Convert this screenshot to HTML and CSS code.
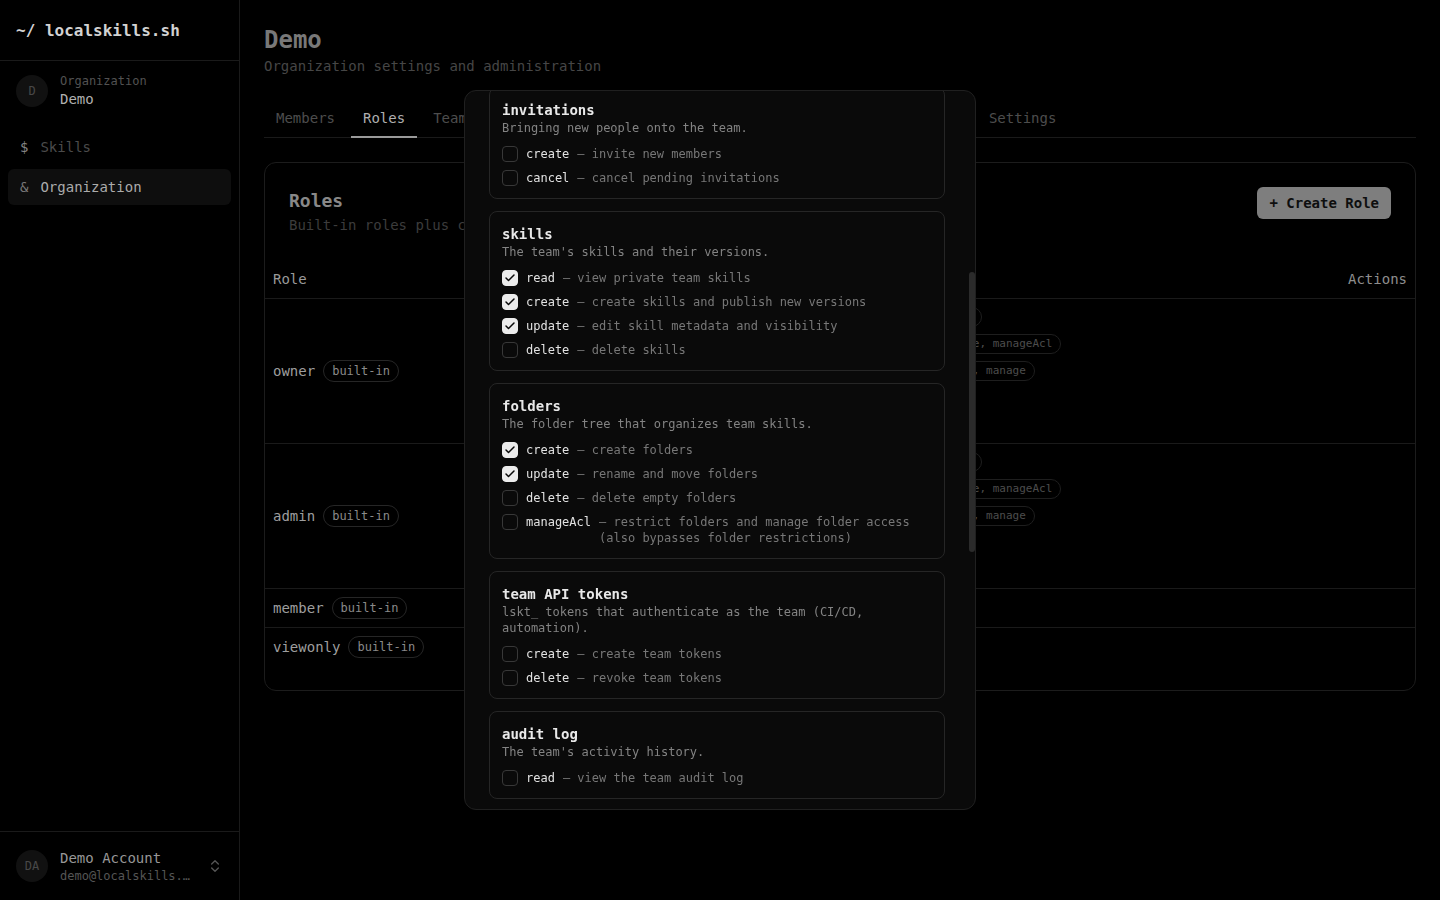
FILE: index.html
```html
<!DOCTYPE html>
<html lang="en">
<head>
  <meta charset="UTF-8" />
  <meta name="viewport" content="width=device-width, initial-scale=1.0" />
  <title>Roles – Demo – localskills.sh</title>
  <link rel="stylesheet" href="styles.css">
</head>

<body>
  <div class="app">
    <!-- SIDEBAR -->
    <aside class="sidebar">
      <div class="brand">~/ localskills.sh</div>

      <div class="org-switch">
        <div class="avatar">D</div>
        <div>
          <div class="org-label">Organization</div>
          <div class="org-name">Demo</div>
        </div>
      </div>

      <nav class="nav">
        <a class="nav-item" href="#"><span class="nav-sym">$</span>Skills</a>
        <a class="nav-item active" href="#"><span class="nav-sym">&amp;</span>Organization</a>
      </nav>

      <div class="account">
        <div class="avatar">DA</div>
        <div class="account-text">
          <div class="account-name">Demo Account</div>
          <div class="account-mail">demo@localskills.sh</div>
        </div>
        <svg class="chevrons" width="16" height="16" viewBox="0 0 24 24" fill="none" stroke="currentColor" stroke-width="2" stroke-linecap="round" stroke-linejoin="round"><path d="m7 15 5 5 5-5"/><path d="m7 9 5-5 5 5"/></svg>
      </div>
    </aside>

    <!-- MAIN -->
    <main class="main">
      <h1 class="page-title">Demo</h1>
      <p class="page-sub">Organization settings and administration</p>

      <div class="tabs">
        <a class="tab" href="#">Members</a>
        <a class="tab active" href="#">Roles</a>
        <a class="tab" href="#">Teams</a>
        <a class="tab" href="#">Invitations</a>
        <a class="tab" href="#">Team Tokens</a>
        <a class="tab" href="#">Audit Log</a>
        <a class="tab" href="#">Billing</a>
        <a class="tab" href="#">SSO</a>
        <a class="tab" href="#">Settings</a>
      </div>

      <section class="card">
        <div class="card-head">
          <div>
            <div class="card-title">Roles</div>
            <div class="card-desc">Built-in roles plus custom roles for this organization.</div>
          </div>
          <button class="btn">+ Create Role</button>
        </div>

        <table class="roles">
          <colgroup>
            <col class="col-role">
            <col class="col-desc">
            <col>
            <col class="col-actions">
          </colgroup>
          <thead>
            <tr>
              <th>Role</th>
              <th>Description</th>
              <th>Permissions</th>
              <th class="right">Actions</th>
            </tr>
          </thead>
          <tbody>
            <tr>
              <td><div class="role"><span class="role-name">owner</span><span class="badge">built-in</span></div></td>
              <td class="muted">Full control of the organization</td>
              <td>
                <div class="perms">
                  <span class="perm">roles: read, create, update, delete</span>
                  <span class="perm">skills: read, create, update, delete, manageAcl</span>
                  <span class="perm">teams: read, create, update, delete, manage</span>
                  <span class="perm">folders: create, update, delete</span>
                  <span class="perm">tokens: create, delete</span>
                </div>
              </td>
              <td></td>
            </tr>
            <tr>
              <td><div class="role"><span class="role-name">admin</span><span class="badge">built-in</span></div></td>
              <td class="muted">Manage members, skills and settings</td>
              <td>
                <div class="perms">
                  <span class="perm">roles: read, create, update, delete</span>
                  <span class="perm">skills: read, create, update, delete, manageAcl</span>
                  <span class="perm">teams: read, create, update, delete, manage</span>
                  <span class="perm">folders: create, update, delete</span>
                  <span class="perm">audit: read</span>
                </div>
              </td>
              <td></td>
            </tr>
            <tr>
              <td><div class="role"><span class="role-name">member</span><span class="badge">built-in</span></div></td>
              <td class="muted">Create and publish skills</td>
              <td><div class="perms"><span class="perm">skills: read, create</span></div></td>
              <td></td>
            </tr>
            <tr>
              <td><div class="role"><span class="role-name">viewonly</span><span class="badge">built-in</span></div></td>
              <td class="muted">Read-only access</td>
              <td><div class="perms"><span class="perm">skills: read</span></div></td>
              <td></td>
            </tr>
          </tbody>
        </table>
      </section>
    </main>
  </div>

  <!-- CREATE ROLE DIALOG -->
  <div class="overlay">
    <div class="dialog">
      <div class="dialog-scroll">
        <div class="dialog-head">
          <h2 class="dialog-title">Create role</h2>
          <p class="dialog-desc">Custom roles grant a chosen set of permissions to members.</p>
        </div>

        <label class="field">
          <span class="field-label">Name</span>
          <input class="input" value="reviewer">
        </label>
        <label class="field">
          <span class="field-label">Description</span>
          <input class="input" value="Reviews and publishes skills">
        </label>

        <div class="perm-heading">Permissions</div>

        <div class="groups">
          <div class="group">
            <div class="group-title">organization</div>
            <div class="group-desc">Organization profile and settings.</div>
            <div class="opts">
              <div class="opt"><span class="check"></span><span class="opt-name">read</span><span class="opt-desc">— view organization settings</span></div>
              <div class="opt"><span class="check"></span><span class="opt-name">update</span><span class="opt-desc">— change name and settings</span></div>
            </div>
          </div>

          <div class="group">
            <div class="group-title">members</div>
            <div class="group-desc">People who belong to the team.</div>
            <div class="opts">
              <div class="opt"><span class="check"></span><span class="opt-name">read</span><span class="opt-desc">— list members</span></div>
              <div class="opt"><span class="check"></span><span class="opt-name">update</span><span class="opt-desc">— change member roles</span></div>
              <div class="opt"><span class="check"></span><span class="opt-name">remove</span><span class="opt-desc">— remove members</span></div>
            </div>
          </div>

          <div class="group">
            <div class="group-title">roles</div>
            <div class="group-desc">Custom roles and their permissions.</div>
            <div class="opts">
              <div class="opt"><span class="check"></span><span class="opt-name">create</span><span class="opt-desc">— create custom roles</span></div>
              <div class="opt"><span class="check"></span><span class="opt-name">update</span><span class="opt-desc">— edit custom roles</span></div>
              <div class="opt"><span class="check"></span><span class="opt-name">delete</span><span class="opt-desc">— delete custom roles</span></div>
            </div>
          </div>

          <div class="group" id="grp-invitations">
            <div class="group-title">invitations</div>
            <div class="group-desc">Bringing new people onto the team.</div>
            <div class="opts">
              <div class="opt"><span class="check"></span><span class="opt-name">create</span><span class="opt-desc">— invite new members</span></div>
              <div class="opt"><span class="check"></span><span class="opt-name">cancel</span><span class="opt-desc">— cancel pending invitations</span></div>
            </div>
          </div>

          <div class="group">
            <div class="group-title">skills</div>
            <div class="group-desc">The team's skills and their versions.</div>
            <div class="opts">
              <div class="opt"><span class="check on"><svg width="12" height="12" viewBox="0 0 24 24" fill="none" stroke="currentColor" stroke-width="3" stroke-linecap="round" stroke-linejoin="round"><path d="M20 6 9 17l-5-5"/></svg></span><span class="opt-name">read</span><span class="opt-desc">— view private team skills</span></div>
              <div class="opt"><span class="check on"><svg width="12" height="12" viewBox="0 0 24 24" fill="none" stroke="currentColor" stroke-width="3" stroke-linecap="round" stroke-linejoin="round"><path d="M20 6 9 17l-5-5"/></svg></span><span class="opt-name">create</span><span class="opt-desc">— create skills and publish new versions</span></div>
              <div class="opt"><span class="check on"><svg width="12" height="12" viewBox="0 0 24 24" fill="none" stroke="currentColor" stroke-width="3" stroke-linecap="round" stroke-linejoin="round"><path d="M20 6 9 17l-5-5"/></svg></span><span class="opt-name">update</span><span class="opt-desc">— edit skill metadata and visibility</span></div>
              <div class="opt"><span class="check"></span><span class="opt-name">delete</span><span class="opt-desc">— delete skills</span></div>
            </div>
          </div>

          <div class="group">
            <div class="group-title">folders</div>
            <div class="group-desc">The folder tree that organizes team skills.</div>
            <div class="opts">
              <div class="opt"><span class="check on"><svg width="12" height="12" viewBox="0 0 24 24" fill="none" stroke="currentColor" stroke-width="3" stroke-linecap="round" stroke-linejoin="round"><path d="M20 6 9 17l-5-5"/></svg></span><span class="opt-name">create</span><span class="opt-desc">— create folders</span></div>
              <div class="opt"><span class="check on"><svg width="12" height="12" viewBox="0 0 24 24" fill="none" stroke="currentColor" stroke-width="3" stroke-linecap="round" stroke-linejoin="round"><path d="M20 6 9 17l-5-5"/></svg></span><span class="opt-name">update</span><span class="opt-desc">— rename and move folders</span></div>
              <div class="opt"><span class="check"></span><span class="opt-name">delete</span><span class="opt-desc">— delete empty folders</span></div>
              <div class="opt"><span class="check"></span><span class="opt-name">manageAcl</span><span class="opt-desc">— restrict folders and manage folder access (also bypasses folder restrictions)</span></div>
            </div>
          </div>

          <div class="group">
            <div class="group-title">team API tokens</div>
            <div class="group-desc">lskt_ tokens that authenticate as the team (CI/CD, automation).</div>
            <div class="opts">
              <div class="opt"><span class="check"></span><span class="opt-name">create</span><span class="opt-desc">— create team tokens</span></div>
              <div class="opt"><span class="check"></span><span class="opt-name">delete</span><span class="opt-desc">— revoke team tokens</span></div>
            </div>
          </div>

          <div class="group">
            <div class="group-title">audit log</div>
            <div class="group-desc">The team's activity history.</div>
            <div class="opts">
              <div class="opt"><span class="check"></span><span class="opt-name">read</span><span class="opt-desc">— view the team audit log</span></div>
            </div>
          </div>

          <div class="group">
            <div class="group-title">settings</div>
            <div class="group-desc">Team-wide configuration.</div>
            <div class="opts">
              <div class="opt"><span class="check"></span><span class="opt-name">update</span><span class="opt-desc">— change team settings</span></div>
            </div>
          </div>
        </div>

        <div class="dialog-foot">
          <button class="btn-ghost">Cancel</button>
          <button class="btn-solid">Create role</button>
        </div>
      </div>
      <div class="scroll-thumb"></div>
    </div>
  </div>

  <script>
    const scroller = document.querySelector(".dialog-scroll");
    const anchor = document.getElementById("grp-invitations");
    scroller.scrollTop = anchor.offsetTop + 4;
  </script>
</body>
</html>
```

FILE: styles.css
```css
body { margin: 0; background: #000; color: #a0a0a0; font-family: "DejaVu Sans Mono", "Liberation Mono", monospace; }
.app { display: flex; height: 100vh; }

/* sidebar */
.sidebar { width: 240px; flex-shrink: 0; box-sizing: border-box; border-right: 1px solid #1a1a1a; display: flex; flex-direction: column; }
.brand { height: 60px; padding: 0 16px; border-bottom: 1px solid #1a1a1a; display: flex; align-items: center; font-size: 16px; font-weight: 600; color: #d2d2d2; }
.org-switch { display: flex; align-items: center; gap: 12px; padding: 12px 16px 11px; }
.avatar { width: 32px; height: 32px; flex-shrink: 0; border-radius: 50%; background: #111; color: #484848; font-size: 12px; display: flex; align-items: center; justify-content: center; }
.org-label { font-size: 12px; line-height: 16px; color: #525252; }
.org-name { font-size: 14px; line-height: 20px; color: #b0b0b0; }
.nav { flex: 1; padding: 9px 8px; display: flex; flex-direction: column; gap: 4px; }
.nav-item { height: 36px; padding: 0 12px; border-radius: 6px; display: flex; align-items: center; gap: 12px; font-size: 14px; color: #4b4b4b; text-decoration: none; }
.nav-sym { color: #858585; }
.nav-item.active { background: #0e0e0e; color: #ababab; }
.nav-item.active .nav-sym { color: #777; }
.account { border-top: 1px solid #1a1a1a; padding: 16px; display: flex; align-items: center; gap: 12px; }
.account-text { flex: 1; min-width: 0; }
.account-name { font-size: 14px; line-height: 20px; color: #979797; }
.account-mail { font-size: 12px; line-height: 16px; color: #555; white-space: nowrap; overflow: hidden; text-overflow: ellipsis; }
.chevrons { color: #555; flex-shrink: 0; }

/* main */
.main { flex: 1; min-width: 0; padding: 24px; }
.page-title { margin: 0; font-size: 24px; line-height: 33px; font-weight: 700; color: #787878; }
.page-sub { margin: 0; font-size: 14px; line-height: 19px; color: #464646; }
.tabs { margin-top: 24px; display: flex; gap: 4px; border-bottom: 1px solid #1a1a1a; }
.tab { padding: 8px 12px; margin-bottom: -1px; border-bottom: 2px solid transparent; font-size: 14px; line-height: 20px; color: #4d4d4d; text-decoration: none; white-space: nowrap; }
.tab.active { color: #afafaf; border-bottom-color: #9a9a9a; }

.card { margin-top: 24px; border: 1px solid #1c1c1c; border-radius: 12px; padding: 24px 0; }
.card-head { display: flex; justify-content: space-between; align-items: flex-start; padding: 0 24px; margin-bottom: 24px; }
.card-title { font-size: 18px; line-height: 28px; font-weight: 600; color: #888; }
.card-desc { font-size: 14px; line-height: 20px; color: #3c3c3c; }
.btn { height: 32px; padding: 0 12px; border: 0; border-radius: 6px; background: #7e7e7e; color: #0e0e0e; font-family: inherit; font-size: 14px; font-weight: 600; }

table.roles { width: 100%; border-collapse: collapse; table-layout: fixed; }
.col-role { width: 220px; }
.col-desc { width: 239px; }
.col-actions { width: 120px; }
.roles th { height: 39px; padding: 0 8px; text-align: left; font-size: 14px; font-weight: 400; color: #9a9a9a; border-bottom: 1px solid #1a1a1a; }
.roles th.right { text-align: right; color: #8e8e8e; }
.roles td { padding: 8px; border-bottom: 1px solid #1a1a1a; vertical-align: middle; font-size: 14px; }
.roles tbody tr:last-child td { border-bottom: 0; }
.role { display: flex; align-items: center; gap: 8px; }
.role-name { color: #9e9e9e; }
.badge { font-size: 12px; line-height: 20px; padding: 0 8px; border: 1px solid #262626; border-radius: 999px; color: #8a8a8a; }
.muted { color: #3c3c3c; }
.perms { display: flex; flex-direction: column; align-items: flex-start; gap: 7px; }
.perm { font-size: 11px; line-height: 18px; padding: 0 8px; border: 1px solid #1e1e1e; border-radius: 999px; color: #4d4d4d; white-space: nowrap; }

/* dialog */
.overlay { position: fixed; inset: 0; display: flex; align-items: center; justify-content: center; }
.dialog { position: relative; width: 512px; height: 80vh; box-sizing: border-box; display: flex; flex-direction: column; background: #0a0a0a; border: 1px solid #202020; border-radius: 12px; overflow: hidden; }
.dialog-scroll { position: relative; flex: 1; min-height: 0; overflow: hidden; padding: 24px 30px 24px 24px; }
.scroll-thumb { position: absolute; right: 0; top: 181px; width: 6px; height: 280px; border-radius: 3px; background: #2b2b2b; }
.dialog-head { margin-bottom: 16px; }
.dialog-title { margin: 0; font-size: 18px; line-height: 28px; font-weight: 600; color: #ededed; }
.dialog-desc { margin: 4px 0 0; font-size: 12px; line-height: 16px; color: #858585; }
.field { display: flex; flex-direction: column; gap: 6px; margin-bottom: 16px; }
.field-label { font-size: 12px; color: #bbb; }
.input { height: 34px; padding: 0 10px; background: transparent; border: 1px solid #262626; border-radius: 6px; color: #e5e5e5; font-family: inherit; font-size: 13px; }
.perm-heading { font-size: 12px; color: #bbb; margin-bottom: 8px; }

.groups { display: flex; flex-direction: column; gap: 12px; }
.group { border: 1px solid #262626; border-radius: 8px; padding: 12px; }
.group-title { font-size: 14px; line-height: 20px; font-weight: 600; color: #e8e8e8; }
.group-desc { font-size: 12px; line-height: 16px; color: #838383; }
.opts { margin-top: 10px; display: flex; flex-direction: column; gap: 8px; }
.opt { display: flex; align-items: flex-start; gap: 8px; font-size: 12px; line-height: 16px; }
.opt-name { color: #e2e2e2; white-space: nowrap; }
.opt-desc { color: #777; }
.check { width: 16px; height: 16px; flex-shrink: 0; box-sizing: border-box; border: 1px solid #383838; border-radius: 4px; display: flex; align-items: center; justify-content: center; color: #0a0a0a; }
.check.on { background: #ececec; border-color: #ececec; }

.dialog-foot { margin-top: 20px; display: flex; justify-content: flex-end; gap: 8px; }
.btn-ghost, .btn-solid { height: 32px; padding: 0 12px; border-radius: 6px; font-family: inherit; font-size: 13px; }
.btn-ghost { background: transparent; border: 1px solid #262626; color: #ddd; }
.btn-solid { background: #ededed; border: 0; color: #0a0a0a; font-weight: 600; }
```
